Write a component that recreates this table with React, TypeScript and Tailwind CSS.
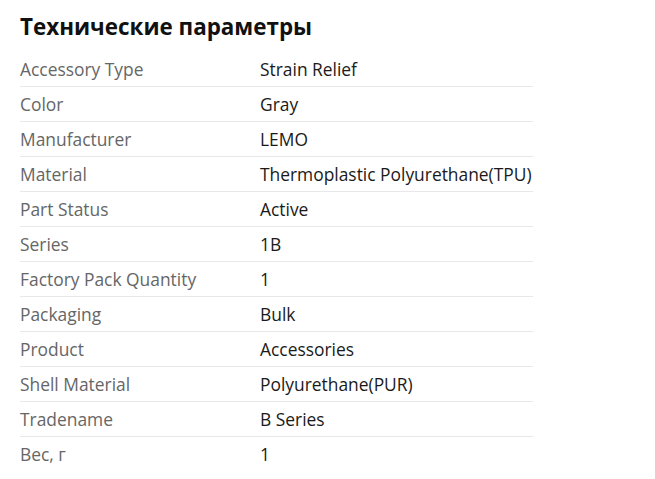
const specs: [string, string][] = [
  ['Accessory Type', 'Strain Relief'],
  ['Color', 'Gray'],
  ['Manufacturer', 'LEMO'],
  ['Material', 'Thermoplastic Polyurethane(TPU)'],
  ['Part Status', 'Active'],
  ['Series', '1B'],
  ['Factory Pack Quantity', '1'],
  ['Packaging', 'Bulk'],
  ['Product', 'Accessories'],
  ['Shell Material', 'Polyurethane(PUR)'],
  ['Tradename', 'B Series'],
  ['Вес, г', '1'],
];

export default function App() {
  return (
    <div className="min-h-[479px] bg-white px-5 pt-[12px] font-['Open_Sans',sans-serif]">
      <h2 className="text-[22.4px] font-bold leading-[30px] text-[#111]">Технические параметры</h2>
      <div className="mt-[10px] w-[513px]">
        {specs.map(([label, value], i) => (
          <div
            key={label}
            className={`grid grid-cols-[240px_1fr] h-[35px] items-center text-[17.4px] ${
              i < specs.length - 1 ? 'border-b border-[#e8e8e8]' : ''
            }`}
          >
            <span className="text-[#666]">{label}</span>
            <span className="text-[#1a1a1a]">{value}</span>
          </div>
        ))}
      </div>
    </div>
  );
}
